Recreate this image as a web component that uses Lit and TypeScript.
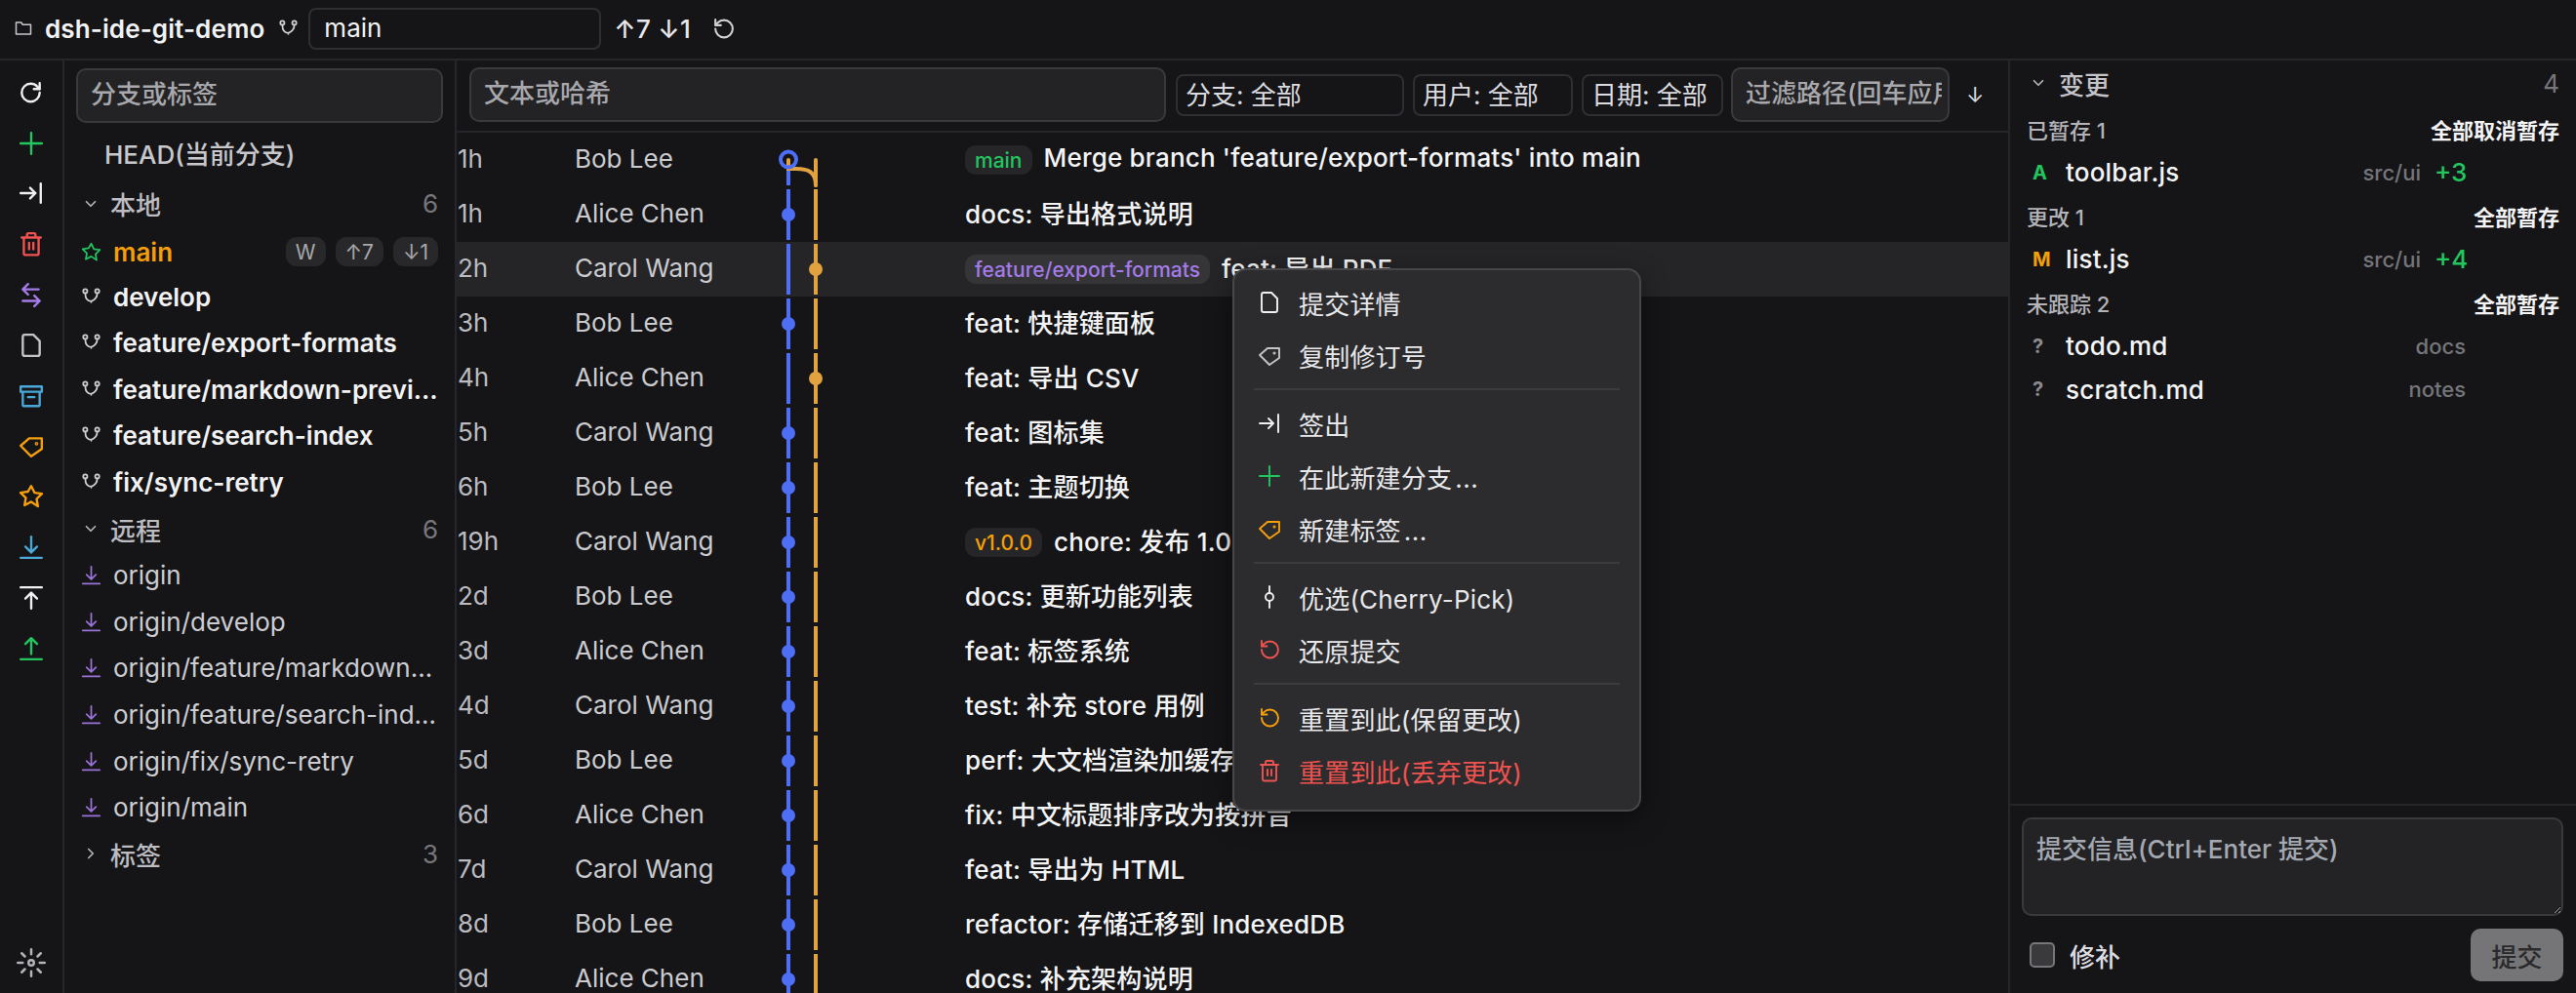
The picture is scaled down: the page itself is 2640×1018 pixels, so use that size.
import { LitElement, html, css, svg } from "lit";
import { customElement } from "lit/decorators.js";

const P: Record<string, any> = {
  refresh: svg`<path d="M20 12a8.500 8.500 0 1 1-8.500-8.500c2.400 0 4.600 1 6.200 2.600L20 8.500"/><path d="M20 3v5.500h-5.500"/>`,
  undo: svg`<path d="M4 12a8.500 8.500 0 1 0 8.500-8.500c-2.400 0-4.600 1-6.200 2.600L4 8.500"/><path d="M4 3v5.500h5.500"/>`,
  plus: svg`<path d="M12 2v20M2 12h20"/>`,
  checkout: svg`<path d="M2 12h14M11 7l5 5-5 5M21 3v18"/>`,
  trash: svg`<path d="M3 6h18M19 6v15a1.500 1.500 0 0 1-1.500 1.500h-11A1.500 1.500 0 0 1 5 21V6M8 6V3.500A1.500 1.500 0 0 1 9.500 2h5A1.500 1.500 0 0 1 16 3.500V6M10 11v6M14 11v6"/>`,
  swap: svg`<path d="M9 2 4 7l5 5M4 7h15M15 13l5 5-5 5M20 18H4"/>`,
  file: svg`<path d="M14 2H6a2 2 0 0 0-2 2v16a2 2 0 0 0 2 2h12a2 2 0 0 0 2-2V8z"/>`,
  archive: svg`<path d="M2 3h20v5H2zM4 8v12a1.500 1.500 0 0 0 1.500 1.500h13A1.500 1.500 0 0 0 20 20V8M9 13h6"/>`,
  tag: svg`<path d="M2 12 10 5h12v10l-10 7z"/><circle cx="17" cy="10" r=".6"/>`,
  star: svg`<path d="m12 2 3.100 6.400 7 1-5 4.900 1.200 7L12 17l-6.300 3.300 1.200-7-5-4.900 7-1z"/>`,
  down: svg`<path d="M12 2v15M6.500 11.500 12 17l5.500-5.500M2 22h20"/>`,
  top: svg`<path d="M2 2h20M12 22V7M6.500 12.500 12 7l5.500 5.500"/>`,
  up: svg`<path d="M12 17V2M6.500 7.500 12 2l5.500 5.500M2 22h20"/>`,
  sun: svg`<circle cx="12" cy="12" r="2.200"/><path d="M12 1v4M12 19v4M1 12h4M19 12h4M4.200 4.200l2.600 2.600M17.200 17.200l2.600 2.600M4.200 19.800l2.600-2.600M17.200 6.800l2.600-2.600"/>`,
  folder: svg`<path d="M2 20V4h7l2 3h11v13z"/>`,
  branch: svg`<circle cx="5" cy="5" r="2.400"/><circle cx="19" cy="5" r="2.400"/><path d="M5 7.500c0 5 2 9.500 7 9.500M19 7.500c0 4.500-3 8-7 9.500v1"/>`,
  chevD: svg`<path d="m6 9 6 6 6-6"/>`,
  chevR: svg`<path d="m9 6 6 6-6 6"/>`,
  pick: svg`<circle cx="12" cy="12" r="4"/><path d="M12 1v7M12 16v7"/>`,
};

const ic = (n: string, cls = "") =>
  html`<svg class="ic ${cls}" viewBox="0 0 24 24">${P[n]}</svg>`;

const rail = [
  ["refresh", "c-white"], ["plus", "c-green"], ["checkout", "c-white"], ["trash", "c-red"],
  ["swap", "c-purple"], ["file", "c-grey"], ["archive", "c-blue"], ["tag", "c-orange"],
  ["star", "c-orange"], ["down", "c-blue"], ["top", "c-white"], ["up", "c-green"],
];

const local = ["develop", "feature/export-formats", "feature/markdown-preview", "feature/search-index", "fix/sync-retry"];
const remote = ["origin", "origin/develop", "origin/feature/markdown-preview", "origin/feature/search-index", "origin/fix/sync-retry", "origin/main"];

type C = { t: string; a: string; m: string; b?: string; bc?: string; n?: string };
const commits: C[] = [
  { t: "1h", a: "Bob Lee", m: "Merge branch 'feature/export-formats' into main", b: "main", bc: "c-green", n: "merge" },
  { t: "1h", a: "Alice Chen", m: "docs: 导出格式说明" },
  { t: "2h", a: "Carol Wang", m: "feat: 导出 PDF", b: "feature/export-formats", bc: "c-purple", n: "o" },
  { t: "3h", a: "Bob Lee", m: "feat: 快捷键面板" },
  { t: "4h", a: "Alice Chen", m: "feat: 导出 CSV", n: "o" },
  { t: "5h", a: "Carol Wang", m: "feat: 图标集" },
  { t: "6h", a: "Bob Lee", m: "feat: 主题切换" },
  { t: "19h", a: "Carol Wang", m: "chore: 发布 1.0.0", b: "v1.0.0", bc: "c-orange" },
  { t: "2d", a: "Bob Lee", m: "docs: 更新功能列表" },
  { t: "3d", a: "Alice Chen", m: "feat: 标签系统" },
  { t: "4d", a: "Carol Wang", m: "test: 补充 store 用例" },
  { t: "5d", a: "Bob Lee", m: "perf: 大文档渲染加缓存" },
  { t: "6d", a: "Alice Chen", m: "fix: 中文标题排序改为按拼音" },
  { t: "7d", a: "Carol Wang", m: "feat: 导出为 HTML" },
  { t: "8d", a: "Bob Lee", m: "refactor: 存储迁移到 IndexedDB" },
  { t: "9d", a: "Alice Chen", m: "docs: 补充架构说明" },
];

const menu: any[] = [
  ["file", "c-white", "提交详情"],
  ["tag", "c-grey", "复制修订号"],
  null,
  ["checkout", "c-white", "签出"],
  ["plus", "c-green", "在此新建分支", "..."],
  ["tag", "c-orange", "新建标签", "..."],
  null,
  ["pick", "c-white", "优选(Cherry-Pick)"],
  ["undo", "c-red", "还原提交"],
  null,
  ["undo", "c-orange", "重置到此(保留更改)"],
  ["trash", "c-red", "重置到此(丢弃更改)", "", true],
];

const graph = (c: C) => {
  const B = "#4d6ef5", O = "#e2a23f";
  if (c.n === "merge")
    return svg`<svg class="graph" viewBox="0 0 200 56">
      <path d="M19 28v26" stroke=${B} stroke-width="4" fill="none"/>
      <path d="M47 28v26" stroke=${O} stroke-width="4" fill="none" stroke-linecap="round"/>
      <path d="M19 28v9h8c12 0 20 3 20 17" stroke=${O} stroke-width="4" fill="none" stroke-linecap="round"/>
      <circle cx="19" cy="27.500" r="8" stroke=${B} stroke-width="4" fill="none"/>
    </svg>`;
  return svg`<svg class="graph" viewBox="0 0 200 56">
    <path d="M19 2v52" stroke=${B} stroke-width="4"/>
    <path d="M47 2v52" stroke=${O} stroke-width="4"/>
    ${c.n === "o"
      ? svg`<circle cx="47" cy="28" r="7" fill=${O}/>`
      : svg`<circle cx="19" cy="28" r="7" fill=${B}/>`}
  </svg>`;
};

const changes = [
  { h: "已暂存 1", act: "全部取消暂存" },
  { s: "A", sc: "c-green", f: "toolbar.js", p: "src/ui", d: "+3" },
  { h: "更改 1", act: "全部暂存" },
  { s: "M", sc: "c-orange", f: "list.js", p: "src/ui", d: "+4" },
  { h: "未跟踪 2", act: "全部暂存" },
  { s: "?", sc: "c-mute", f: "todo.md", p: "docs", d: "" },
  { s: "?", sc: "c-mute", f: "scratch.md", p: "notes", d: "" },
];

@customElement("app-root")
export class AppRoot extends LitElement {
  static styles = css`
    :host {
      display: flex; flex-direction: column; width: 2640px; height: 1018px; overflow: hidden;
      background: #151518; color: #f2f2f3; position: relative;
      font-family: Inter, "Noto Sans CJK SC", sans-serif; font-size: 26px;
    }
    * { box-sizing: border-box; }
    .ic { width: 22px; height: 22px; fill: none; stroke: currentColor; stroke-width: 2.300; stroke-linecap: round; stroke-linejoin: round; flex: none; display: block; }
    .c-white { color: #f0f0f2; } .c-green { color: #22c55e; } .c-red { color: #ef5350; }
    .c-purple { color: #a47be8; } .c-grey { color: #c4c4c8; } .c-blue { color: #4aa8d8; }
    .c-orange { color: #f59e0b; } .c-mute { color: #8a8a8e; }

    .top { height: 62px; flex: none; display: flex; align-items: center; border-bottom: 2px solid #26262a; padding: 0 0 2px 14px; }
    .top .folder { width: 20px; height: 18px; color: #c8c8cc; stroke-width: 2; margin-right: 12px; }
    .repo { font-weight: 600; white-space: nowrap; letter-spacing: .1px; }
    .top .branch { width: 21px; height: 21px; margin-left: 14px; color: #d0d0d4; stroke-width: 2; }
    .sel { height: 43px; border: 2px solid #2e2e33; border-radius: 8px; display: flex; align-items: center; padding: 0 14px 2px; white-space: nowrap; color: #f2f2f3; }
    .branchsel { width: 300px; margin-left: 10px; }
    .sync { margin-left: 13px; font-size: 26px; font-weight: 500; white-space: nowrap; color: #e8e8ea; letter-spacing: .3px; }
    .top .undo { margin-left: 21px; width: 25px; height: 25px; color: #d0d0d4; stroke-width: 2; }

    .body { flex: 1; display: flex; min-height: 0; }
    .rail { width: 66px; flex: none; border-right: 2px solid #26262a; display: flex; flex-direction: column; align-items: center; padding: 7px 0 5px; }
    .rail .it { height: 51.800px; flex: none; display: flex; align-items: center; justify-content: center; }
    .rail .ic { width: 26px; height: 26px; stroke-width: 2.200; }
    .rail .sp { flex: 1; }
    .rail .gear { width: 30px; height: 30px; color: #b4b4b8; stroke-width: 2; }

    .side { width: 402px; flex: none; border-right: 2px solid #26262a; padding: 8px 12px 0 12px; overflow: hidden; display: flex; flex-direction: column; }
    input, textarea { font: inherit; outline: none; font-weight: 500; }
    input::placeholder, textarea::placeholder { color: #a8a8ac; opacity: 1; }
    .search { height: 56px; flex: none; background: #232325; border: 2px solid #3a3a3e; border-radius: 10px; padding: 0 13px 3px; color: #eee; width: 100%; }
    .rows { padding-top: 6.500px; display: flex; flex-direction: column; }
    .r { height: 47.600px; flex: none; display: flex; align-items: center; min-width: 0; }
    .head { padding-left: 29px; color: #c8c8cc; font-weight: 500; }
    .sec { color: #bdbdc1; font-weight: 500; padding-left: 6px; padding-right: 5px; }
    .sec.first { margin-top: 5px; }
    .sec .ic { width: 18px; height: 18px; margin-right: 11px; color: #b4b4b8; }
    .sec .n { flex: 1; }
    .count { color: #77777b; font-weight: 400; }
    .item { padding-left: 5px; padding-right: 1px; font-weight: 600; color: #f2f2f3; }
    .item .ic { width: 21px; height: 21px; margin-right: 12px; color: #d0d0d4; stroke-width: 2; }
    .item .lbl { flex: 1; min-width: 0; overflow: hidden; text-overflow: ellipsis; white-space: nowrap; }
    .main .lbl { color: #f59e0b; }
    .main .ic { color: #22c55e; }
    .main { padding-right: 5px; position: relative; top: 2px; }
    .rm { font-weight: 400; color: #cdcdd1; }
    .rm .ic { color: #9a72d8; }
    .bd { height: 30px; background: #28282b; color: #a8a8ac; border-radius: 11px; padding: 0 10px; font-size: 21px; display: flex; align-items: center; margin-left: 10px; flex: none; font-weight: 400; }

    .center { flex: 1; min-width: 0; display: flex; flex-direction: column; }
    .filters { height: 74px; flex: none; display: flex; align-items: center; padding: 0 0 2px 13px; border-bottom: 2px solid #26262a; }
    .filters .search { margin-right: 10px; }
    .filters .txt { width: 714px; }
    .filters .path { width: 224px; padding-right: 6px; margin-right: 0; margin-left: 8px; }
    .filters .sel { margin-right: 9px; color: #dcdce0; padding: 0 8px 3px; }
    .f1 { width: 234px; } .f2 { width: 164px; } .f3 { width: 145px; }
    .filters .sel.f3 { margin-right: 0; }
    .arrow { margin-left: 17px; font-size: 22px; color: #dcdce0; }

    .list { flex: 1; min-height: 0; overflow: hidden; }
    .row { height: 56px; display: flex; align-items: center; padding-left: 1px; white-space: nowrap; }
    .row.hl { background: #252528; }
    .row .t { width: 120px; flex: none; color: #bcbcc0; margin-top: -3px; }
    .row .a { width: 200px; flex: none; color: #cbcbcf; margin-top: -3px; }
    .graph { width: 200px; height: 56px; flex: none; display: block; }
    .tagb { height: 30px; background: rgba(255,255,255,.075); border-radius: 11px; padding: 0 10px; font-size: 21px; display: flex; align-items: center; margin-right: 12px; font-weight: 500; }
    .row .m { font-weight: 500; color: #f4f4f5; margin-top: -5px; letter-spacing: .19px; }

    .right { width: 582px; flex: none; border-left: 2px solid #26262a; margin-left: -2px; display: flex; flex-direction: column; }
    .ch { flex: 1; min-height: 0; padding: 0 17px 0 18px; }
    .ch .hd { height: 46px; margin-bottom: 2px; display: flex; align-items: center; color: #c4c4c8; font-weight: 500; padding-left: 2px; }
    .ch .hd .ic { width: 18px; height: 18px; margin-right: 12px; color: #b4b4b8; }
    .ch .hd .n { flex: 1; }
    .g { height: 44.500px; display: flex; align-items: center; justify-content: space-between; font-size: 22px; color: #b4b4b8; font-weight: 500; margin-left: -1px; }
    .g .act { color: #f4f4f5; font-weight: 600; }
    .fr { height: 44.500px; display: flex; align-items: center; white-space: nowrap; }
    .fr .s { width: 39px; font-size: 20px; font-weight: 700; padding-left: 5px; flex: none; }
    .fr .f { font-weight: 500; color: #f4f4f5; letter-spacing: .2px; }
    .fr .p { font-size: 22px; color: #75757a; margin-left: auto; font-weight: 500; }
    .fr .d { color: #22c55e; font-weight: 500; width: 32px; flex: none; margin-left: 14px; }
    .fr .d:empty { width: 0; margin-left: 0; }
    .fr .pad { width: 96px; flex: none; }
    .commit { height: 194px; flex: none; border-top: 2px solid #26262a; padding: 12px 13px 0 12px; }
    .commit textarea { display: block; width: 100%; height: 101px; background: #232325; border: 2px solid #3a3a3e; border-radius: 10px; padding: 10px 13px; color: #eee; resize: vertical; }
    .commit textarea::placeholder { color: #a4a8b0; }
    .ca { display: flex; align-items: center; height: 54px; margin-top: 13px; padding-left: 8px; }
    .cb { width: 26px; height: 26px; border: 2px solid #77777b; background: #3a3a3c; border-radius: 5px; margin-right: 15px; flex: none; }
    .ca .am { flex: 1; color: #dcdce0; font-weight: 500; }
    .btn { width: 95px; height: 54px; background: #757578; color: #2a2a2c; border-radius: 10px; display: flex; align-items: center; justify-content: center; font-weight: 500; }

    .menu { position: absolute; left: 1263px; top: 275px; width: 419px; height: 557px; background: #2c2c2f; border: 2px solid #47474a; border-radius: 14px; padding: 6px 0; box-shadow: 0 8px 28px rgba(0,0,0,.45); }
    .mi { height: 54px; display: flex; align-items: center; padding-left: 24px; color: #e8e8ea; letter-spacing: .2px; }
    .mi .ic { width: 24px; height: 24px; margin-right: 18px; stroke-width: 1.900; }
    .mi.danger { color: #ef5350; }
    .dots { letter-spacing: .5px; margin-left: 3px; }
    .ms { height: 2px; background: #3c3c40; margin: 7px 20px; }
  `;

  render() {
    return html`
      <div class="top">
        ${ic("folder", "folder")}
        <span class="repo">dsh-ide-git-demo</span>
        ${ic("branch", "branch")}
        <div class="sel branchsel">main</div>
        <span class="sync">↑7 ↓1</span>
        ${ic("undo", "undo")}
      </div>
      <div class="body">
        <div class="rail">
          ${rail.map(([n, c]) => html`<div class="it">${ic(n, c)}</div>`)}
          <div class="sp"></div>
          <div class="it">${ic("sun", "gear")}</div>
        </div>
        <div class="side">
          <input class="search" placeholder="分支或标签" />
          <div class="rows">
            <div class="r head">HEAD(当前分支)</div>
            <div class="r sec first">${ic("chevD")}<span class="n">本地</span><span class="count">6</span></div>
            <div class="r item main">${ic("star")}<span class="lbl">main</span>
              <span class="bd">W</span><span class="bd">↑7</span><span class="bd">↓1</span></div>
            ${local.map((b) => html`<div class="r item">${ic("branch")}<span class="lbl">${b}</span></div>`)}
            <div class="r sec">${ic("chevD")}<span class="n">远程</span><span class="count">6</span></div>
            ${remote.map((b) => html`<div class="r item rm">${ic("down")}<span class="lbl">${b}</span></div>`)}
            <div class="r sec">${ic("chevR")}<span class="n">标签</span><span class="count">3</span></div>
          </div>
        </div>
        <div class="center">
          <div class="filters">
            <input class="search txt" placeholder="文本或哈希" />
            <div class="sel f1">分支: 全部</div>
            <div class="sel f2">用户: 全部</div>
            <div class="sel f3">日期: 全部</div>
            <input class="search path" placeholder="过滤路径(回车应用)" />
            <span class="arrow">↓</span>
          </div>
          <div class="list">
            ${commits.map((c, i) => html`
              <div class="row ${i === 2 ? "hl" : ""}">
                <span class="t">${c.t}</span>
                <span class="a">${c.a}</span>
                ${graph(c)}
                ${c.b ? html`<span class="tagb ${c.bc}">${c.b}</span>` : ""}
                <span class="m">${c.m}</span>
              </div>`)}
          </div>
        </div>
        <div class="right">
          <div class="ch">
            <div class="hd">${ic("chevD")}<span class="n">变更</span><span class="count">4</span></div>
            ${changes.map((x: any) => x.h
              ? html`<div class="g"><span>${x.h}</span><span class="act">${x.act}</span></div>`
              : html`<div class="fr"><span class="s ${x.sc}">${x.s}</span><span class="f">${x.f}</span><span class="p">${x.p}</span><span class="d">${x.d}</span><span class="pad"></span></div>`)}
          </div>
          <div class="commit">
            <textarea placeholder="提交信息(Ctrl+Enter 提交)"></textarea>
            <div class="ca"><span class="cb"></span><span class="am">修补</span><span class="btn">提交</span></div>
          </div>
        </div>
      </div>
      <div class="menu">
        ${menu.map((m) => m
          ? html`<div class="mi ${m[4] ? "danger" : ""}">${ic(m[0], m[1])}<span>${m[2]}${m[3] ? html`<span class="dots">${m[3]}</span>` : ""}</span></div>`
          : html`<div class="ms"></div>`)}
      </div>
    `;
  }
}
